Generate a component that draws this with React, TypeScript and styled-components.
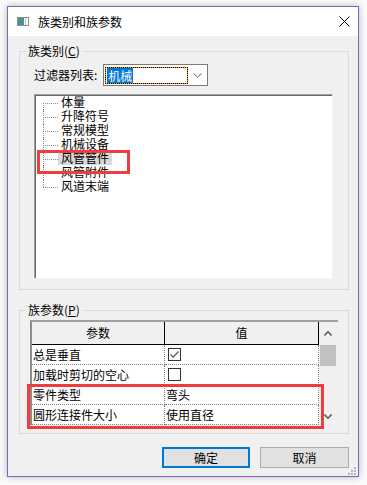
import styled, { createGlobalStyle } from "styled-components";

const GlobalStyle = createGlobalStyle`
  html, body {
    margin: 0;
    padding: 0;
    background: #fbfbfb;
  }
  body {
    font-family: "Noto Sans CJK SC", "Noto Sans", sans-serif;
    font-size: 12px;
    color: #000;
  }
  * {
    box-sizing: border-box;
  }
`;

const Page = styled.div`
  width: 367px;
  height: 485px;
  padding: 6px 0 0 7px;
`;

const Window = styled.div`
  position: relative;
  width: 352px;
  height: 471px;
  border: 1px solid #8563c6;
  background: #f0f0f0;
  box-shadow: 0 0 7px rgba(0, 0, 0, 0.28);
  display: flex;
  flex-direction: column;
`;

const TitleBar = styled.div`
  height: 29px;
  flex: none;
  background: #fff;
  display: flex;
  align-items: center;
  padding: 0 8px 0 9px;
`;

const TitleText = styled.span`
  flex: 1;
  margin-left: 9px;
  line-height: 14px;
  font-size: 12px;
`;

const Body = styled.div`
  flex: 1;
  display: flex;
  flex-direction: column;
  padding: 8px 9px 0 11px;
`;

const Group = styled.fieldset<{ $top?: number }>`
  margin: ${(p) => p.$top ?? 0}px 0 0 0;
  min-width: 0;
  border: 1px solid #dcdcdc;
  padding: ${(p) => (p.$top ? "3px 10px 8px 10px" : "6px 15px 10px 14px")};
`;

const Legend = styled.legend<{ $shift: number }>`
  margin-left: ${(p) => p.$shift}px;
  padding: 0 2px;
  height: 14px;
  line-height: 14px;
  font-size: 12px;
  u {
    text-decoration: underline;
    text-underline-offset: 1px;
  }
`;

const FilterRow = styled.div`
  display: flex;
  align-items: center;
  gap: 6px;
  height: 22px;
`;

const FilterLabel = styled.span`
  line-height: 14px;
`;

const Combo = styled.div`
  width: 105px;
  height: 22px;
  border: 1px solid #7a7a7a;
  background: #fff;
  display: flex;
  align-items: center;
  padding-left: 1px;
`;

const FocusRect = styled.div`
  width: 83px;
  height: 17px;
  border: 1px dotted #000;
  background: linear-gradient(#fff, #fff) padding-box, #ff8c00 border-box;
  display: flex;
  align-items: center;
`;

const Selected = styled.span`
  margin-left: 1px;
  padding: 0 1px;
  height: 15px;
  line-height: 15px;
  background: #0078d7;
  color: #fff;
`;

const ComboArrow = styled.div`
  flex: 1;
  display: flex;
  justify-content: center;
  align-items: center;
`;

const TreeList = styled.div`
  margin-top: 8px;
  height: 185px;
  background: #fff;
  border: 1px solid;
  border-color: #a0a0a0 #f4f4f4 #f4f4f4 #a0a0a0;
  box-shadow: inset 1px 1px 0 #696969;
  padding: 1px 0 0 8px;
  font-family: "Liberation Sans", "Noto Sans CJK SC", sans-serif;
`;

const TreeRow = styled.div<{ $marked?: boolean }>`
  position: relative;
  display: flex;
  height: 14px;
  &::after {
    content: "";
    display: ${(p) => (p.$marked ? "block" : "none")};
    position: absolute;
    left: -6px;
    top: -2px;
    width: 87px;
    height: 18px;
    border: 3px solid #f23b3b;
    z-index: 2;
  }
`;

const Connector = styled.span<{ $first?: boolean; $last?: boolean }>`
  position: relative;
  width: 15px;
  height: 14px;
  flex: none;
  &::before {
    content: "";
    position: absolute;
    left: 0;
    top: ${(p) => (p.$first ? 7 : 0)}px;
    bottom: ${(p) => (p.$last ? 7 : 0)}px;
    border-left: 1px dotted #8a8a8a;
  }
  &::after {
    content: "";
    position: absolute;
    left: 0;
    right: 0;
    top: 7px;
    border-top: 1px dotted #8a8a8a;
  }
`;

const TreeLabel = styled.span<{ $active?: boolean }>`
  padding: 0 3px;
  height: 13px;
  line-height: 15px;
  background: ${(p) => (p.$active ? "#d9d9d9" : "transparent")};
`;

const Frame = styled.div`
  position: relative;
  display: flex;
  border-top: 2px solid #a0a0a0;
  border-left: 2px solid #8c8c8c;
`;

const Grid = styled.div`
  display: grid;
  grid-template-columns: 133px 154px;
  background: #fff;
`;

const HeadCell = styled.div`
  height: 23px;
  background: #f0f0f0;
  border-bottom: 1px solid #000;
  border-right: 1px solid #000;
  display: flex;
  align-items: center;
  justify-content: center;
  line-height: 14px;
`;

const Cell = styled.div<{ $pad?: number }>`
  height: 20px;
  border-bottom: 1px dotted #808080;
  border-right: 1px dotted #808080;
  display: flex;
  align-items: center;
  padding-left: ${(p) => p.$pad ?? 1}px;
  line-height: 14px;
`;

const Check = styled.span`
  width: 13px;
  height: 13px;
  border: 1px solid #333;
  background: #fff;
  display: flex;
  align-items: center;
  justify-content: center;
`;

const Scrollbar = styled.div`
  flex: 1;
  display: flex;
  flex-direction: column;
  background: #f0f0f0;
`;

const ScrollBtn = styled.div<{ $h: number }>`
  height: ${(p) => p.$h}px;
  display: flex;
  align-items: center;
  justify-content: center;
  padding-right: 1px;
`;

const Thumb = styled.div`
  margin-left: 1px;
  width: 16px;
  height: 21px;
  background: #c1c1c1;
`;

const ScrollSpace = styled.div`
  flex: 1;
`;

const Mark = styled.div`
  position: absolute;
  left: -5px;
  top: 62px;
  width: 297px;
  height: 45px;
  border: 3px solid #f23b3b;
  pointer-events: none;
`;

const Buttons = styled.div`
  margin-top: 13px;
  display: flex;
  justify-content: flex-end;
  gap: 10px;
`;

const Button = styled.button<{ $primary?: boolean }>`
  width: ${(p) => (p.$primary ? 88 : 89)}px;
  height: 21px;
  padding: 0;
  background: #e1e1e1;
  border: ${(p) => (p.$primary ? "2px solid #0078d7" : "1px solid #adadad")};
  font-family: "Noto Sans CJK SC", "Noto Sans", sans-serif;
  font-size: 12px;
  line-height: 14px;
  color: #000;
`;

const Grip = styled.svg`
  position: absolute;
  right: 2px;
  bottom: 1px;
`;

const TitleIcon = () => (
  <svg width="12" height="9" viewBox="0 0 12 9">
    <defs>
      <linearGradient id="ti" x1="0" y1="0" x2="1" y2="1">
        <stop offset="0" stopColor="#4f9a6f" />
        <stop offset="1" stopColor="#4a86c8" />
      </linearGradient>
    </defs>
    <rect x="0.5" y="0.5" width="11" height="8" fill="#fff" stroke="#8c8c8c" />
    <rect x="1" y="1" width="6" height="7" fill="url(#ti)" />
    <rect x="8" y="1" width="1" height="7" fill="#c8c8c8" />
  </svg>
);

const CloseIcon = () => (
  <svg width="11" height="11" viewBox="0 0 11 11">
    <path d="M0.5 0.5 L10.5 10.5 M10.5 0.5 L0.5 10.5" stroke="#000" strokeWidth="1" />
  </svg>
);

const Chevron = ({ up, w = 9, h = 5, color = "#606060", sw = 1 }: { up?: boolean; w?: number; h?: number; color?: string; sw?: number }) => (
  <svg width={w} height={h} viewBox={`0 0 ${w} ${h}`}>
    <polyline
      points={up ? `0.5,${h - 0.5} ${w / 2},0.8 ${w - 0.5},${h - 0.5}` : `0.5,0.5 ${w / 2},${h - 0.8} ${w - 0.5},0.5`}
      fill="none"
      stroke={color}
      strokeWidth={sw}
    />
  </svg>
);

const categories = ["体量", "升降符号", "常规模型", "机械设备", "风管管件", "风管附件", "风道末端"];
const activeIndex = 4;

const params: { name: string; value: string | boolean }[] = [
  { name: "总是垂直", value: true },
  { name: "加载时剪切的空心", value: false },
  { name: "零件类型", value: "弯头" },
  { name: "圆形连接件大小", value: "使用直径" },
];

export default function App() {
  return (
    <>
      <GlobalStyle />
      <Page>
        <Window>
          <TitleBar>
            <TitleIcon />
            <TitleText>族类别和族参数</TitleText>
            <CloseIcon />
          </TitleBar>
          <Body>
            <Group>
              <Legend $shift={-8}>
                族类别(<u>C</u>)
              </Legend>
              <FilterRow>
                <FilterLabel>过滤器列表:</FilterLabel>
                <Combo>
                  <FocusRect>
                    <Selected>机械</Selected>
                  </FocusRect>
                  <ComboArrow>
                    <Chevron />
                  </ComboArrow>
                </Combo>
              </FilterRow>
              <TreeList>
                {categories.map((c, i) => (
                  <TreeRow key={c} $marked={i === activeIndex}>
                    <Connector $first={i === 0} $last={i === categories.length - 1} />
                    <TreeLabel $active={i === activeIndex}>{c}</TreeLabel>
                  </TreeRow>
                ))}
              </TreeList>
            </Group>
            <Group $top={13}>
              <Legend $shift={-4}>
                族参数(<u>P</u>)
              </Legend>
              <Frame>
                <Grid>
                  <HeadCell>参数</HeadCell>
                  <HeadCell>值</HeadCell>
                  {params.map((p) => [
                    <Cell key={p.name + "n"}>{p.name}</Cell>,
                    <Cell key={p.name + "v"} $pad={typeof p.value === "boolean" ? 3 : 1}>
                      {typeof p.value === "boolean" ? (
                        <Check>
                          {p.value && (
                            <svg width="11" height="11" viewBox="0 0 11 11">
                              <path d="M1.5 5.5 L4.2 8.2 L9.5 2.5" fill="none" stroke="#555" strokeWidth="1.2" />
                            </svg>
                          )}
                        </Check>
                      ) : (
                        p.value
                      )}
                    </Cell>,
                  ])}
                </Grid>
                <Scrollbar>
                  <ScrollBtn $h={23}>
                    <Chevron up w={8} h={5} sw={1.6} />
                  </ScrollBtn>
                  <Thumb />
                  <ScrollSpace />
                  <ScrollBtn $h={17}>
                    <Chevron w={8} h={5} sw={1.6} />
                  </ScrollBtn>
                </Scrollbar>
                <Mark />
              </Frame>
            </Group>
            <Buttons>
              <Button $primary>确定</Button>
              <Button>取消</Button>
            </Buttons>
          </Body>
          <Grip width="8" height="8" viewBox="0 0 8 8">
            <g fill="#b8b8b8">
              <rect x="6" y="0" width="2" height="2" />
              <rect x="3" y="3" width="2" height="2" />
              <rect x="6" y="3" width="2" height="2" />
              <rect x="0" y="6" width="2" height="2" />
              <rect x="3" y="6" width="2" height="2" />
              <rect x="6" y="6" width="2" height="2" />
            </g>
          </Grip>
        </Window>
      </Page>
    </>
  );
}
